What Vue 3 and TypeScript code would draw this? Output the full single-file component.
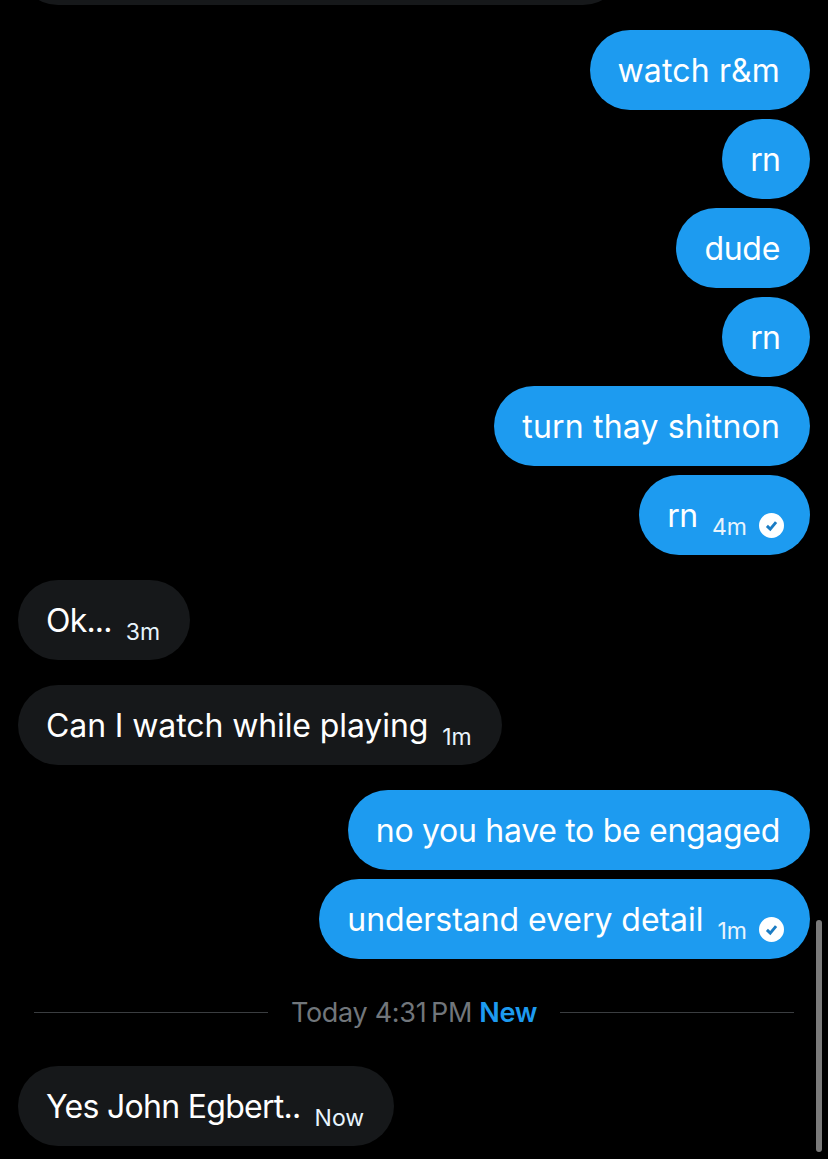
<script setup lang="ts">
interface Message {
  id: number
  text: string
  sent: boolean
  time?: string
  seen?: boolean
  groupStart?: boolean
  tracking?: number
}

const before: Message[] = [
  { id: 1, text: 'watch r&m', sent: true, groupStart: true, tracking: 0.14 },
  { id: 2, text: 'rn', sent: true, tracking: -0.8 },
  { id: 3, text: 'dude', sent: true },
  { id: 4, text: 'rn', sent: true, tracking: -0.8 },
  { id: 5, text: 'turn thay shitnon', sent: true, tracking: 0.17 },
  { id: 6, text: 'rn', sent: true, time: '4m', seen: true },
  { id: 7, text: 'Ok...', sent: false, time: '3m', groupStart: true, tracking: -0.8 },
  { id: 8, text: 'Can I watch while playing', sent: false, time: '1m', groupStart: true, tracking: -0.1 },
  { id: 9, text: 'no you have to be engaged', sent: true, groupStart: true },
  { id: 10, text: 'understand every detail', sent: true, time: '1m', seen: true, tracking: -0.04 },
]

const last: Message = { id: 11, text: 'Yes John Egbert..', sent: false, time: 'Now', tracking: -0.71 }

function trackingStyle(m: Message) {
  return m.tracking === undefined ? undefined : { letterSpacing: `${m.tracking}px` }
}
</script>

<template>
  <div class="chat">
    <div class="bubble received cut-off" />

    <div class="messages">
      <div
        v-for="m in before"
        :key="m.id"
        class="row"
        :class="{ sent: m.sent, 'group-start': m.groupStart }"
      >
        <div class="bubble" :class="[m.sent ? 'outgoing' : 'received', { 'has-seen': m.seen }]">
          <span class="text" :style="trackingStyle(m)">{{ m.text }}</span>
          <span v-if="m.time" class="time">{{ m.time }}</span>
          <svg v-if="m.seen" class="seen" viewBox="0 0 24 24" aria-hidden="true">
            <circle cx="12" cy="12" r="12" fill="#fff" />
            <path d="M7.6 12.4l3.2 3.1 5.6-6.7" fill="none" stroke="#1a7cc4" stroke-width="2.8" />
          </svg>
        </div>
      </div>
    </div>

    <div class="divider">
      <span class="line" />
      <span class="label">Today 4:31&#8201;PM <b>New</b></span>
      <span class="line" />
    </div>

    <div class="row">
      <div class="bubble received">
        <span class="text" :style="trackingStyle(last)">{{ last.text }}</span>
        <span class="time">{{ last.time }}</span>
      </div>
    </div>

    <div class="scrollbar" />
  </div>
</template>

<style scoped>
.chat {
  position: relative;
  height: 1159px;
  overflow: hidden;
  background: #000;
  font-family: Inter, "Liberation Sans", sans-serif;
  color: #fff;
}

.cut-off {
  width: 605px;
  margin: -75px 0 25px 18px;
}

.messages {
  display: flex;
  flex-direction: column;
  gap: 9px;
}

.row {
  display: flex;
  padding: 0 18px;
}

.row.sent {
  justify-content: flex-end;
}

.row.group-start {
  margin-top: 16px;
}

.row:first-child {
  margin-top: 0;
}

.bubble {
  display: flex;
  align-items: center;
  height: 80px;
  box-sizing: border-box;
  padding: 0 30px 0 28px;
  border-radius: 40px;
}

.bubble.has-seen {
  padding-right: 26px;
}

.outgoing {
  background: #1d9bf0;
}

.received {
  background: #16181a;
}

.text {
  font-size: 32px;
  letter-spacing: -0.3px;
  white-space: nowrap;
}

.time {
  margin: 24px 0 0 14px;
  font-size: 23px;
  color: #e8f4fd;
  white-space: nowrap;
}

.seen {
  width: 25px;
  height: 25px;
  margin: 21px 0 0 12px;
}

.divider {
  display: flex;
  align-items: center;
  gap: 23px;
  height: 50px;
  margin: 28px 34px 29px;
}

.line {
  flex: 1;
  height: 1px;
  background: #3a3d40;
}

.label {
  font-size: 27px;
  letter-spacing: -0.3px;
  color: #71767b;
  white-space: nowrap;
}

.label b {
  font-weight: 600;
  color: #1d9bf0;
}

.scrollbar {
  position: absolute;
  top: 920px;
  left: 816px;
  width: 6px;
  height: 232px;
  border-radius: 3px;
  background: #7a7a7a;
}
</style>

<style>
body {
  background: #000;
}
</style>
